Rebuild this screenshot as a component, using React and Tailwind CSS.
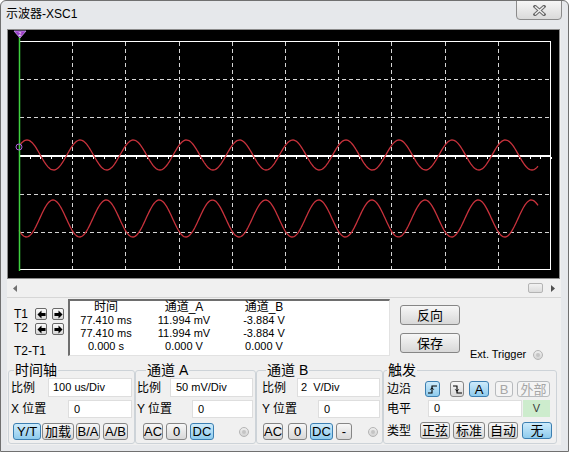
import React from "react";

const F = "font-['Liberation_Sans','Noto_Sans_CJK_SC',sans-serif]";

function wave(c, a, phase, x0, x1) {
  let d = "";
  for (let x = x0; x <= x1; x += 1) {
    const y = c - a * Math.cos((2 * Math.PI * (x - phase)) / 53.15);
    d += (x === x0 ? "M" : "L") + x + " " + y.toFixed(2) + " ";
  }
  return d;
}

function Scope() {
  const vx = Array.from({ length: 9 }, (_, i) => Math.round(11 + 53.2 * (i + 1)) + 0.5);
  const hy = [1, 2, 4, 5].map((k) => Math.round(11 + 38.17 * k) + 0.5);
  const ticks = [];
  for (let x = 11; x <= 543; x += 10.64) ticks.push(Math.round(x) + 0.5);
  return (
    <svg width="551" height="248" viewBox="0 0 551 248" className="block">
      <rect x="0" y="0" width="551" height="248" fill="#000" />
      {vx.map((x) => (
        <line key={"v" + x} x1={x} y1="12" x2={x} y2="239" stroke="#d4d4d4" strokeWidth="1" strokeDasharray="4 3" />
      ))}
      {hy.map((y) => (
        <line key={"h" + y} x1="12" y1={y} x2="542" y2={y} stroke="#d4d4d4" strokeWidth="1" strokeDasharray="4 3" />
      ))}
      <line x1="11" y1="126" x2="543" y2="126" stroke="#ffffff" strokeWidth="2" />
      {ticks.map((x) => (
        <line key={"t" + x} x1={x} y1="127" x2={x} y2="129" stroke="#ffffff" strokeWidth="1" />
      ))}
      <rect x="11.5" y="11.5" width="531" height="228" fill="none" stroke="#ffffff" strokeWidth="1" />
      <path d={wave(125, 15, 19, 11, 530)} fill="none" stroke="#c8323c" strokeWidth="1.3" />
      <path d={wave(188.5, 18.5, 45, 11, 530)} fill="none" stroke="#c8323c" strokeWidth="1.3" />
      <line x1="11.5" y1="7" x2="11.5" y2="241" stroke="#3fd03f" strokeWidth="1.5" />
      <polygon points="6,1 18,1 12,8" fill="#9a3cc8" stroke="#c9a0f0" strokeWidth="0.8" />
      <text x="12" y="6" fontSize="5" fill="#ffffff" textAnchor="middle" fontFamily="Liberation Sans">2</text>
      <circle cx="11" cy="117" r="3" fill="none" stroke="#b060e0" strokeWidth="1" />
    </svg>
  );
}

function Btn({ className = "", kind = "normal", children }) {
  const kinds = {
    normal: "border-[#868686] bg-linear-to-b from-[#f7f7f7] to-[#d8d8d8] text-black",
    blue: "border-[#3c7fb1] bg-linear-to-b from-[#cdebfb] to-[#8ecbed] text-black",
    disabled: "border-[#b7babd] bg-[#f4f4f4] text-[#a6a6a6]",
  };
  return (
    <div className={`flex items-center justify-center rounded-[3px] border text-[13px] leading-none ${kinds[kind]} ${className}`}>
      {children}
    </div>
  );
}

function Input({ className = "", children }) {
  return (
    <div className={`h-full bg-white border border-[#dedede] flex items-center text-[11px] text-black whitespace-pre ${className}`}>
      {children}
    </div>
  );
}

function Radio({ className = "" }) {
  return (
    <div className={`w-[10px] h-[10px] rounded-full border border-[#b4b4b4] bg-linear-to-b from-[#eeeeee] to-[#d4d4d4] flex items-center justify-center ${className}`}>
      <div className="w-[4px] h-[4px] rounded-full bg-[#c4c4c4]" />
    </div>
  );
}

function Arrow({ dir, className = "" }) {
  return (
    <div className={`w-[12px] h-[12px] rounded-[2px] border border-[#6a6a6a] bg-linear-to-b from-[#fbfbfb] to-[#d6d6d6] flex items-center justify-center ${className}`}>
      <svg width="9" height="9" viewBox="0 0 10 10">
        {dir === "left" ? (
          <polygon points="0.5,5 5,0.5 5,3.2 9.5,3.2 9.5,6.8 5,6.8 5,9.5" fill="#000" />
        ) : (
          <polygon points="9.5,5 5,0.5 5,3.2 0.5,3.2 0.5,6.8 5,6.8 5,9.5" fill="#000" />
        )}
      </svg>
    </div>
  );
}

function Title({ className = "", children }) {
  return (
    <div className={`-mt-[8px] h-[14px] self-start px-[1px] bg-[#f0f0f0] text-[14px] leading-[14px] text-black ${className}`}>
      {children}
    </div>
  );
}

export default function App() {
  return (
    <div className={`w-[569px] h-[452px] bg-[#e6e8eb] border border-[#707070] rounded-t-[6px] flex flex-col overflow-hidden ${F}`}>
      {/* Title bar */}
      <div className="h-[28px] shrink-0 flex items-start justify-between">
        <div className="pl-[5px] pt-[6px] text-[12px] leading-[14px] text-black">示波器-XSC1</div>
        <div className="mr-[6px] -mt-[1px] w-[46px] h-[20px] rounded-b-[4px] border border-[#8b8b8b] bg-linear-to-b from-[#f6f6f6] to-[#dadada] flex items-center justify-center">
          <svg width="13" height="11" viewBox="0 0 13 11">
            <line x1="2" y1="1.5" x2="11" y2="9.5" stroke="#6a6a6a" strokeWidth="3.4" strokeLinecap="square" />
            <line x1="11" y1="1.5" x2="2" y2="9.5" stroke="#6a6a6a" strokeWidth="3.4" strokeLinecap="square" />
            <line x1="2" y1="1.5" x2="11" y2="9.5" stroke="#f4f4f4" strokeWidth="1.4" />
            <line x1="11" y1="1.5" x2="2" y2="9.5" stroke="#f4f4f4" strokeWidth="1.4" />
          </svg>
        </div>
      </div>

      {/* Client area */}
      <div className="ml-[6px] w-[554px] h-[416px] shrink-0 bg-[#f0f0f0] flex flex-col">
        <div className="w-[553px] h-[250px] border border-[#8c8c8c] bg-black">
          <Scope />
        </div>

        {/* Scrollbar */}
        <div className="h-[18px] flex items-center justify-between pl-[6px] pr-[6px]">
          <svg width="4" height="7" viewBox="0 0 4 7">
            <polygon points="4,0 0,3.5 4,7" fill="#707070" />
          </svg>
          <div className="flex items-center">
            <div className="w-[15px] h-[10px] rounded-[2px] border border-[#b4b4b4] bg-linear-to-b from-[#f2f2f2] to-[#dcdcdc]" />
            <svg width="4" height="7" viewBox="0 0 4 7" className="ml-[8px]">
              <polygon points="0,0 4,3.5 0,7" fill="#505050" />
            </svg>
          </div>
        </div>

        {/* Measurement row */}
        <div className="h-[61px] border-t border-[#d6d6d6] flex items-start">
          <div className="ml-[2px] mt-[1px] w-[59px] h-[57px] flex flex-col pl-[5px] pt-[9px] text-[12px] text-black">
            <div className="flex items-center h-[12px]">
              <span className="w-[21px] leading-none">T1</span>
              <Arrow dir="left" />
              <Arrow dir="right" className="ml-[5px]" />
            </div>
            <div className="flex items-center h-[12px] mt-[3px]">
              <span className="w-[21px] leading-none -mt-[3px]">T2</span>
              <Arrow dir="left" />
              <Arrow dir="right" className="ml-[5px]" />
            </div>
            <div className="flex items-center h-[12px] mt-[10px] leading-none">T2-T1</div>
          </div>

          <div className="mt-[1px] w-[322px] h-[57px] bg-white border-t-2 border-l-2 border-r border-b border-t-[#6e6e6e] border-l-[#6e6e6e] border-r-[#e2e2e2] border-b-[#e2e2e2] grid grid-cols-[72px_84px_76px] auto-rows-[13px] text-center text-black">
            <div className="text-[12px] leading-[13px]">时间</div>
            <div className="text-[12px] leading-[13px]">通道_A</div>
            <div className="text-[12px] leading-[13px]">通道_B</div>
            <div className="text-[11px] leading-[13px]">77.410 ms</div>
            <div className="text-[11px] leading-[13px]">11.994 mV</div>
            <div className="text-[11px] leading-[13px]">-3.884 V</div>
            <div className="text-[11px] leading-[13px]">77.410 ms</div>
            <div className="text-[11px] leading-[13px]">11.994 mV</div>
            <div className="text-[11px] leading-[13px]">-3.884 V</div>
            <div className="text-[11px] leading-[13px]">0.000 s</div>
            <div className="text-[11px] leading-[13px]">0.000 V</div>
            <div className="text-[11px] leading-[13px]">0.000 V</div>
          </div>

          <div className="ml-[10px] mt-[7px] flex flex-col gap-[8px]">
            <Btn className="w-[60px] h-[20px]">反向</Btn>
            <Btn className="w-[60px] h-[20px]">保存</Btn>
          </div>

          <div className="ml-[10px] mt-[49px] flex items-center">
            <span className="text-[11px] leading-[12px] text-black">Ext. Trigger</span>
            <Radio className="ml-[7px] mt-[3px]" />
          </div>
        </div>

        {/* Control groups */}
        <div className="h-[87px] flex items-start">
          {/* 时间轴 */}
          <div className="ml-[1px] mt-[12px] w-[127px] h-[74px] border border-[#cdd3d8] rounded-[3px] flex flex-col">
            <Title className="ml-[5px]">时间轴</Title>
            <div className="mt-[1px] h-[19px] flex items-center pl-[2px]">
              <span className="w-[37px] text-[12px] leading-none">比例</span>
              <Input className="w-[84px] pl-[4px]">100 us/Div</Input>
            </div>
            <div className="mt-[3px] h-[18px] flex items-center pl-[2px]">
              <span className="w-[57px] text-[12px] leading-none">X 位置</span>
              <Input className="w-[64px] pl-[5px]">0</Input>
            </div>
            <div className="mt-[5px] h-[17px] flex items-center pl-[4px]">
              <Btn kind="blue" className="w-[28px] h-full text-[12px]">Y/T</Btn>
              <Btn className="ml-[1px] w-[32px] h-full">加载</Btn>
              <Btn className="ml-[2px] w-[24px] h-full text-[12px]">B/A</Btn>
              <Btn className="ml-[3px] w-[25px] h-full text-[12px]">A/B</Btn>
            </div>
          </div>

          {/* 通道 A */}
          <div className="mt-[12px] w-[121px] h-[74px] border border-[#cdd3d8] rounded-[3px] flex flex-col">
            <Title className="ml-[10px]">通道 A</Title>
            <div className="mt-[1px] h-[19px] flex items-center pl-[1px]">
              <span className="w-[33px] text-[12px] leading-none">比例</span>
              <Input className="w-[83px] pl-[5px]">50 mV/Div</Input>
            </div>
            <div className="mt-[3px] h-[18px] flex items-center pl-[1px]">
              <span className="w-[55px] text-[12px] leading-none">Y 位置</span>
              <Input className="w-[61px] pl-[5px]">0</Input>
            </div>
            <div className="mt-[5px] h-[17px] flex items-center pl-[7px]">
              <Btn className="w-[20px] h-full text-[12px]">AC</Btn>
              <Btn className="ml-[3px] w-[21px] h-full text-[12px]">0</Btn>
              <Btn kind="blue" className="ml-[3px] w-[24px] h-full text-[12px]">DC</Btn>
              <Radio className="ml-[25px]" />
            </div>
          </div>

          {/* 通道 B */}
          <div className="mt-[12px] w-[127px] h-[74px] border border-[#cdd3d8] rounded-[3px] flex flex-col">
            <Title className="ml-[9px]">通道 B</Title>
            <div className="mt-[1px] h-[19px] flex items-center pl-[5px]">
              <span className="w-[35px] text-[12px] leading-none">比例</span>
              <Input className="w-[83px] pl-[3px]">2  V/Div</Input>
            </div>
            <div className="mt-[3px] h-[18px] flex items-center pl-[5px]">
              <span className="w-[56px] text-[12px] leading-none">Y 位置</span>
              <Input className="w-[62px] pl-[5px]">0</Input>
            </div>
            <div className="mt-[5px] h-[17px] flex items-center pl-[6px]">
              <Btn className="w-[20px] h-full text-[12px]">AC</Btn>
              <Btn className="ml-[5px] w-[19px] h-full text-[12px]">0</Btn>
              <Btn kind="blue" className="ml-[3px] w-[23px] h-full text-[12px]">DC</Btn>
              <Btn className="ml-[3px] w-[16px] h-full text-[12px]">-</Btn>
              <Radio className="ml-[16px]" />
            </div>
          </div>

          {/* 触发 */}
          <div className="mt-[12px] w-[174px] h-[74px] border border-[#cdd3d8] rounded-[3px] flex flex-col">
            <Title className="ml-[3px]">触发</Title>
            <div className="mt-[4px] h-[16px] flex items-center pl-[3px]">
              <span className="w-[38px] text-[12px] leading-none">边沿</span>
              <Btn kind="blue" className="w-[15px] h-full">
                <svg width="11" height="11" viewBox="0 0 11 11">
                  <path d="M1 9 H5 V2 H10" fill="none" stroke="#000" strokeWidth="1.1" />
                  <path d="M3.3 5.6 L5 3.8 L6.7 5.6" fill="none" stroke="#000" strokeWidth="1" />
                </svg>
              </Btn>
              <Btn className="ml-[10px] w-[14px] h-full">
                <svg width="11" height="11" viewBox="0 0 11 11">
                  <path d="M1 2 H5 V9 H10" fill="none" stroke="#000" strokeWidth="1.1" />
                  <path d="M3.3 5.4 L5 7.2 L6.7 5.4" fill="none" stroke="#000" strokeWidth="1" />
                </svg>
              </Btn>
              <Btn kind="blue" className="ml-[5px] w-[20px] h-full text-[12px]">A</Btn>
              <Btn kind="disabled" className="ml-[6px] w-[18px] h-full text-[12px]">B</Btn>
              <Btn kind="disabled" className="ml-[4px] w-[33px] h-full">外部</Btn>
            </div>
            <div className="mt-[3px] h-[17px] flex items-center pl-[3px]">
              <span className="w-[41px] text-[12px] leading-none">电平</span>
              <Input className="w-[94px] pl-[5px]">0</Input>
              <div className="ml-[1px] w-[27px] h-full bg-[#cdeccd] flex items-center justify-center text-[11px] text-[#3a3a3a]">V</div>
            </div>
            <div className="mt-[5px] h-[17px] flex items-center pl-[3px]">
              <span className="w-[33px] text-[12px] leading-none">类型</span>
              <Btn className="w-[30px] h-full">正弦</Btn>
              <Btn className="ml-[3px] w-[32px] h-full">标准</Btn>
              <Btn className="ml-[3px] w-[30px] h-full">自动</Btn>
              <Btn kind="blue" className="ml-[4px] w-[30px] h-full">无</Btn>
            </div>
          </div>
        </div>
      </div>
    </div>
  );
}
